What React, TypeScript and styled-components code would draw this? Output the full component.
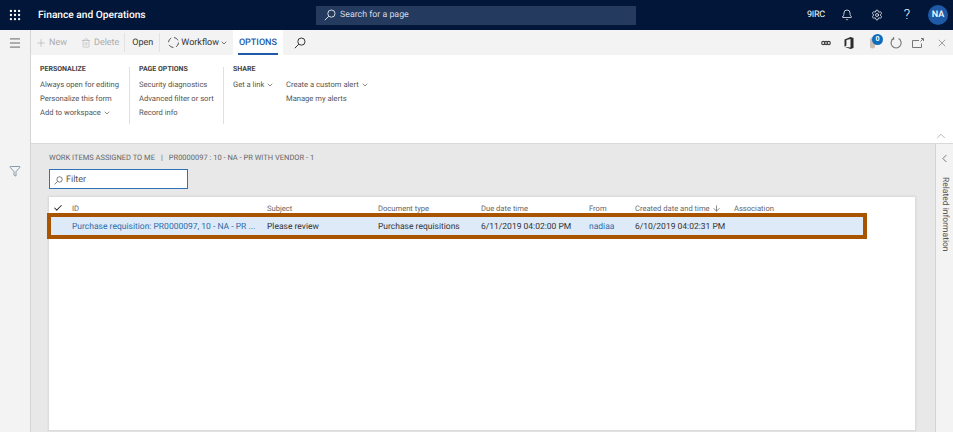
import React from 'react';
import styled, { createGlobalStyle } from 'styled-components';
import { Bell, Settings, Plus, Trash2, X, Menu, Filter, ChevronDown, ChevronUp, ChevronLeft, Check, ArrowDown, Grip } from 'lucide-react';

const GlobalStyle = createGlobalStyle`
    html, body {
        margin: 0;
        padding: 0;
        height: 100%;
        overflow: hidden;
        background: #fff;
    }
    #root {
        height: 100%;
    }
    * {
        box-sizing: border-box;
    }
`;

const COLUMNS = '195px 111px 103px 108px 46px 99px 1fr';

const SearchIcon = ({ size = 12 }: { size?: number }) => (
    <svg width={size} height={size} viewBox="0 0 12 12" fill="none" stroke="currentColor" strokeWidth="1">
        <circle cx="7.4" cy="4.6" r="3.6" />
        <path d="M4.8 7.2 L0.8 11.2" />
    </svg>
);

const WorkflowIcon = () => (
    <svg width="13" height="13" viewBox="0 0 13 13" fill="none" stroke="#555" strokeWidth="1">
        <circle cx="6.5" cy="6.5" r="5" strokeDasharray="5 2.8" />
    </svg>
);

const ChainIcon = () => (
    <svg width="10" height="6" viewBox="0 0 10 6" fill="none" stroke="#444" strokeWidth="1.2">
        <circle cx="2.3" cy="3" r="1.6" />
        <circle cx="5" cy="3" r="1.6" />
        <circle cx="7.7" cy="3" r="1.6" />
    </svg>
);

const OfficeIcon = () => (
    <svg width="10" height="12" viewBox="0 0 10 12">
        <path d="M0.5 2.4 L6.5 0 L9.5 1 V11 L6.5 12 L0.5 9.8 L6.5 10.6 V2 L2.4 3 V8.6 L0.5 9.8 Z" fill="#2b2b2b" />
    </svg>
);

const ClipIcon = () => (
    <svg width="7" height="12" viewBox="0 0 7 12">
        <rect x="1" y="0.5" width="5" height="11" rx="2.5" fill="#c9bcb4" />
    </svg>
);

const RefreshIcon = () => (
    <svg width="12" height="12" viewBox="0 0 12 12" fill="none" stroke="#777" strokeWidth="1.1">
        <path d="M8.6 1.6 A5 5 0 1 1 3.6 1.6" />
        <path d="M3.6 0 V2.2 H1.6" />
    </svg>
);

const MaximizeIcon = () => (
    <svg width="12" height="10" viewBox="0 0 12 10" fill="none" stroke="#777" strokeWidth="1">
        <path d="M7 2.5 H0.5 V9.5 H9.5 V5.5" />
        <path d="M8.5 3.5 L11 1 M9 0.5 H11.5 V3" />
    </svg>
);

const Page = styled.div`
    width: 953px;
    height: 432px;
    display: flex;
    flex-direction: column;
    font-family: Roboto, 'Liberation Sans', sans-serif;
    font-size: 8.5px;
    color: #333;
    text-rendering: geometricPrecision;
`;

const TopBar = styled.header`
    height: 30px;
    flex: none;
    display: flex;
    align-items: center;
    background: #011638;
    color: #fff;
    padding-left: 8px;
`;

const Brand = styled.div`
    margin-left: 16px;
    width: 278px;
    font-size: 10.2px;
    font-weight: 500;
`;

const SearchBox = styled.div`
    width: 320px;
    height: 19px;
    display: flex;
    align-items: center;
    gap: 4px;
    padding-left: 8px;
    background: #243a5e;
    color: #d5dbe6;
    font-size: 8.8px;
`;

const TopRight = styled.div`
    margin-left: auto;
    display: flex;
    align-items: center;
    padding-right: 5px;
`;

const Company = styled.span`
    font-size: 9px;
    letter-spacing: -0.2px;
    margin-right: 7px;
`;

const TopIcon = styled.span`
    width: 30px;
    display: flex;
    justify-content: center;
    font-size: 14px;
    font-weight: 300;
    line-height: 14px;
`;

const Avatar = styled.span`
    width: 20px;
    height: 20px;
    margin-left: 6px;
    border-radius: 50%;
    background: #1e5aa8;
    display: flex;
    align-items: center;
    justify-content: center;
    font-size: 9px;
    font-weight: 500;
`;

const Body = styled.div`
    flex: 1;
    min-height: 0;
    display: flex;
`;

const Rail = styled.nav`
    width: 31px;
    flex: none;
    display: flex;
    flex-direction: column;
    align-items: center;
    padding-top: 6px;
    background: #f3f3f3;
    border-right: 1px solid #d4d4d4;
    color: #555;
`;

const RailFilter = styled.span`
    margin-top: 115px;
    color: #4a6a86;
    display: flex;
`;

const Main = styled.main`
    flex: 1;
    min-width: 0;
    display: flex;
    flex-direction: column;
`;

const ActionBar = styled.div`
    height: 25px;
    flex: none;
    display: flex;
    align-items: center;
    background: #f3f3f3;
    padding-left: 4px;
`;

const Action = styled.span<{ $disabled?: boolean; $gap?: number; $after?: number }>`
    display: flex;
    align-items: center;
    gap: ${(p) => p.$gap ?? 3}px;
    height: 20px;
    margin-right: ${(p) => p.$after ?? 6}px;
    color: ${(p) => (p.$disabled ? '#ababab' : '#333')};
    font-size: 9px;
`;

const ActionDivider = styled.span`
    width: 1px;
    height: 19px;
    background: #e2e2e2;
    margin-right: 7px;
`;

const OptionsTab = styled.span`
    height: 25px;
    width: 50px;
    background: #fff;
    display: flex;
    align-items: center;
    justify-content: center;
    color: #1e5aa8;
    font-size: 9px;
    font-weight: 500;
    position: relative;
    margin-right: 11px;
    &::after {
        content: '';
        position: absolute;
        left: 5px;
        right: 5px;
        bottom: 0;
        height: 2px;
        background: #1e5aa8;
    }
`;

const ActionIcons = styled.div`
    margin-left: auto;
    display: flex;
    align-items: center;
    color: #666;
`;

const ActionIcon = styled.span<{ $width: number }>`
    width: ${(p) => p.$width}px;
    display: flex;
    justify-content: center;
    position: relative;
`;

const Badge = styled.span`
    position: absolute;
    top: -3px;
    left: 15px;
    width: 11px;
    height: 11px;
    border-radius: 50%;
    background: #0f6cbd;
    color: #fff;
    font-size: 7px;
    font-weight: 700;
    display: flex;
    align-items: center;
    justify-content: center;
`;

const Ribbon = styled.section`
    height: 89px;
    flex: none;
    display: flex;
    padding-top: 9px;
    background: #fff;
    border-bottom: 1px solid #d9d9d9;
    position: relative;
`;

const RibbonGroup = styled.div<{ $width: number; $left: number }>`
    width: ${(p) => p.$width}px;
    padding-left: ${(p) => p.$left}px;
`;

const RibbonDivider = styled.span`
    width: 1px;
    height: 57px;
    margin-top: 3px;
    background: #e0e0e0;
`;

const GroupTitle = styled.div`
    font-size: 7px;
    font-weight: 700;
    color: #444;
    line-height: 11px;
    margin-bottom: 3px;
`;

const RibbonColumns = styled.div`
    display: flex;
`;

const RibbonColumn = styled.div<{ $width: number }>`
    width: ${(p) => p.$width}px;
`;

const RibbonItem = styled.div`
    display: flex;
    align-items: center;
    gap: 2px;
    font-size: 7.6px;
    line-height: 14px;
    color: #555;
    white-space: nowrap;
`;

const Collapse = styled.span`
    position: absolute;
    right: 5px;
    bottom: 0;
    color: #999;
    display: flex;
`;

const Content = styled.div`
    flex: 1;
    min-height: 0;
    display: flex;
`;

const Workspace = styled.div`
    flex: 1;
    min-width: 0;
    display: flex;
    flex-direction: column;
    padding: 8px 20px 2px 18px;
    background: #e8e8e8;
`;

const Breadcrumb = styled.div`
    font-size: 7.5px;
    line-height: 12px;
    color: #666;
`;

const CrumbSeparator = styled.span`
    margin: 0 6px;
`;

const FilterBox = styled.div`
    width: 139px;
    height: 20px;
    margin-top: 5px;
    display: flex;
    align-items: center;
    gap: 3px;
    padding: 2px 0 0 4px;
    background: #fff;
    border: 1px solid #2f72b5;
    color: #555;
    font-size: 9px;
`;

const Grid = styled.div`
    flex: 1;
    margin-top: 8px;
    background: #fff;
    box-shadow: 0 0 2px 1px rgba(0, 0, 0, 0.08);
`;

const HeaderRow = styled.div`
    display: grid;
    grid-template-columns: ${COLUMNS};
    height: 20px;
    padding-top: 2px;
    align-items: center;
    padding-left: 23px;
    font-size: 7.6px;
    color: #666;
    position: relative;
`;

const HeaderCheck = styled.span`
    position: absolute;
    left: 4px;
    top: 6px;
    color: #333;
    display: flex;
`;

const SortCell = styled.span`
    display: flex;
    align-items: center;
    gap: 2px;
    white-space: nowrap;
`;

const SelectedRow = styled.div`
    display: grid;
    grid-template-columns: ${COLUMNS};
    align-items: center;
    width: 820px;
    height: 26px;
    margin-left: -2px;
    margin-top: -4px;
    padding: 1px 0 0 21px;
    background: #deeaf7;
    border: 4px solid #a85400;
    font-size: 8.5px;
    color: #333;
    white-space: nowrap;
`;

const LinkCell = styled.span`
    color: #2f6aa8;
`;

const SidePanel = styled.aside`
    width: 18px;
    flex: none;
    background: #f3f3f3;
    border-left: 1px solid #d4d4d4;
    display: flex;
    flex-direction: column;
    align-items: center;
    padding-top: 8px;
    color: #444;
`;

const SideLabel = styled.span`
    margin-top: 12px;
    writing-mode: vertical-rl;
    font-size: 8.5px;
    color: #555;
`;

export default (() => (
    <Page>
        <GlobalStyle />
        <TopBar>
            <Grip size={14} />
            <Brand>Finance and Operations</Brand>
            <SearchBox>
                <SearchIcon />
                Search for a page
            </SearchBox>
            <TopRight>
                <Company>9IRC</Company>
                <TopIcon><Bell size={12} strokeWidth={1.5} /></TopIcon>
                <TopIcon><Settings size={12} strokeWidth={1.5} /></TopIcon>
                <TopIcon>?</TopIcon>
                <Avatar>NA</Avatar>
            </TopRight>
        </TopBar>
        <Body>
            <Rail>
                <Menu size={14} strokeWidth={1.5} />
                <RailFilter><Filter size={12} strokeWidth={1.3} /></RailFilter>
            </Rail>
            <Main>
                <ActionBar>
                    <Action $disabled $gap={2} $after={14}><Plus size={12} strokeWidth={1.2} />New</Action>
                    <Action $disabled $after={5}><Trash2 size={10} strokeWidth={1.3} />Delete</Action>
                    <ActionDivider />
                    <Action>Open</Action>
                    <ActionDivider />
                    <Action $gap={1} $after={5}><WorkflowIcon />Workflow<ChevronDown size={8} /></Action>
                    <OptionsTab>OPTIONS</OptionsTab>
                    <Action><SearchIcon /></Action>
                    <ActionIcons>
                        <ActionIcon $width={30}><ChainIcon /></ActionIcon>
                        <ActionIcon $width={16}><OfficeIcon /></ActionIcon>
                        <ActionIcon $width={30}><ClipIcon /><Badge>0</Badge></ActionIcon>
                        <ActionIcon $width={18}><RefreshIcon /></ActionIcon>
                        <ActionIcon $width={26}><MaximizeIcon /></ActionIcon>
                        <ActionIcon $width={22}><X size={12} strokeWidth={1.2} /></ActionIcon>
                    </ActionIcons>
                </ActionBar>
                <Ribbon>
                    <RibbonGroup $width={98} $left={9}>
                        <GroupTitle>PERSONALIZE</GroupTitle>
                        <RibbonItem>Always open for editing</RibbonItem>
                        <RibbonItem>Personalize this form</RibbonItem>
                        <RibbonItem>Add to workspace<ChevronDown size={8} /></RibbonItem>
                    </RibbonGroup>
                    <RibbonDivider />
                    <RibbonGroup $width={93} $left={9}>
                        <GroupTitle>PAGE OPTIONS</GroupTitle>
                        <RibbonItem>Security diagnostics</RibbonItem>
                        <RibbonItem>Advanced filter or sort</RibbonItem>
                        <RibbonItem>Record info</RibbonItem>
                    </RibbonGroup>
                    <RibbonDivider />
                    <RibbonGroup $width={300} $left={9}>
                        <GroupTitle>SHARE</GroupTitle>
                        <RibbonColumns>
                            <RibbonColumn $width={53}>
                                <RibbonItem>Get a link<ChevronDown size={8} /></RibbonItem>
                            </RibbonColumn>
                            <RibbonColumn $width={120}>
                                <RibbonItem>Create a custom alert<ChevronDown size={8} /></RibbonItem>
                                <RibbonItem>Manage my alerts</RibbonItem>
                            </RibbonColumn>
                        </RibbonColumns>
                    </RibbonGroup>
                    <Collapse><ChevronUp size={14} strokeWidth={1.2} /></Collapse>
                </Ribbon>
                <Content>
                    <Workspace>
                        <Breadcrumb>WORK ITEMS ASSIGNED TO ME<CrumbSeparator>|</CrumbSeparator>PR0000097 : 10 - NA - PR WITH VENDOR - 1</Breadcrumb>
                        <FilterBox><SearchIcon size={9} />Filter</FilterBox>
                        <Grid>
                            <HeaderRow>
                                <HeaderCheck><Check size={10} strokeWidth={2.5} /></HeaderCheck>
                                <span>ID</span>
                                <span>Subject</span>
                                <span>Document type</span>
                                <span>Due date time</span>
                                <span>From</span>
                                <SortCell>Created date and time<ArrowDown size={9} /></SortCell>
                                <span>Association</span>
                            </HeaderRow>
                            <SelectedRow>
                                <LinkCell>Purchase requisition: PR0000097, 10 - NA - PR ...</LinkCell>
                                <span>Please review</span>
                                <span>Purchase requisitions</span>
                                <span>6/11/2019 04:02:00 PM</span>
                                <LinkCell>nadiaa</LinkCell>
                                <span>6/10/2019 04:02:31 PM</span>
                                <span />
                            </SelectedRow>
                        </Grid>
                    </Workspace>
                    <SidePanel>
                        <ChevronLeft size={13} strokeWidth={1.3} />
                        <SideLabel>Related information</SideLabel>
                    </SidePanel>
                </Content>
            </Main>
        </Body>
    </Page>
)) as React.FC;
